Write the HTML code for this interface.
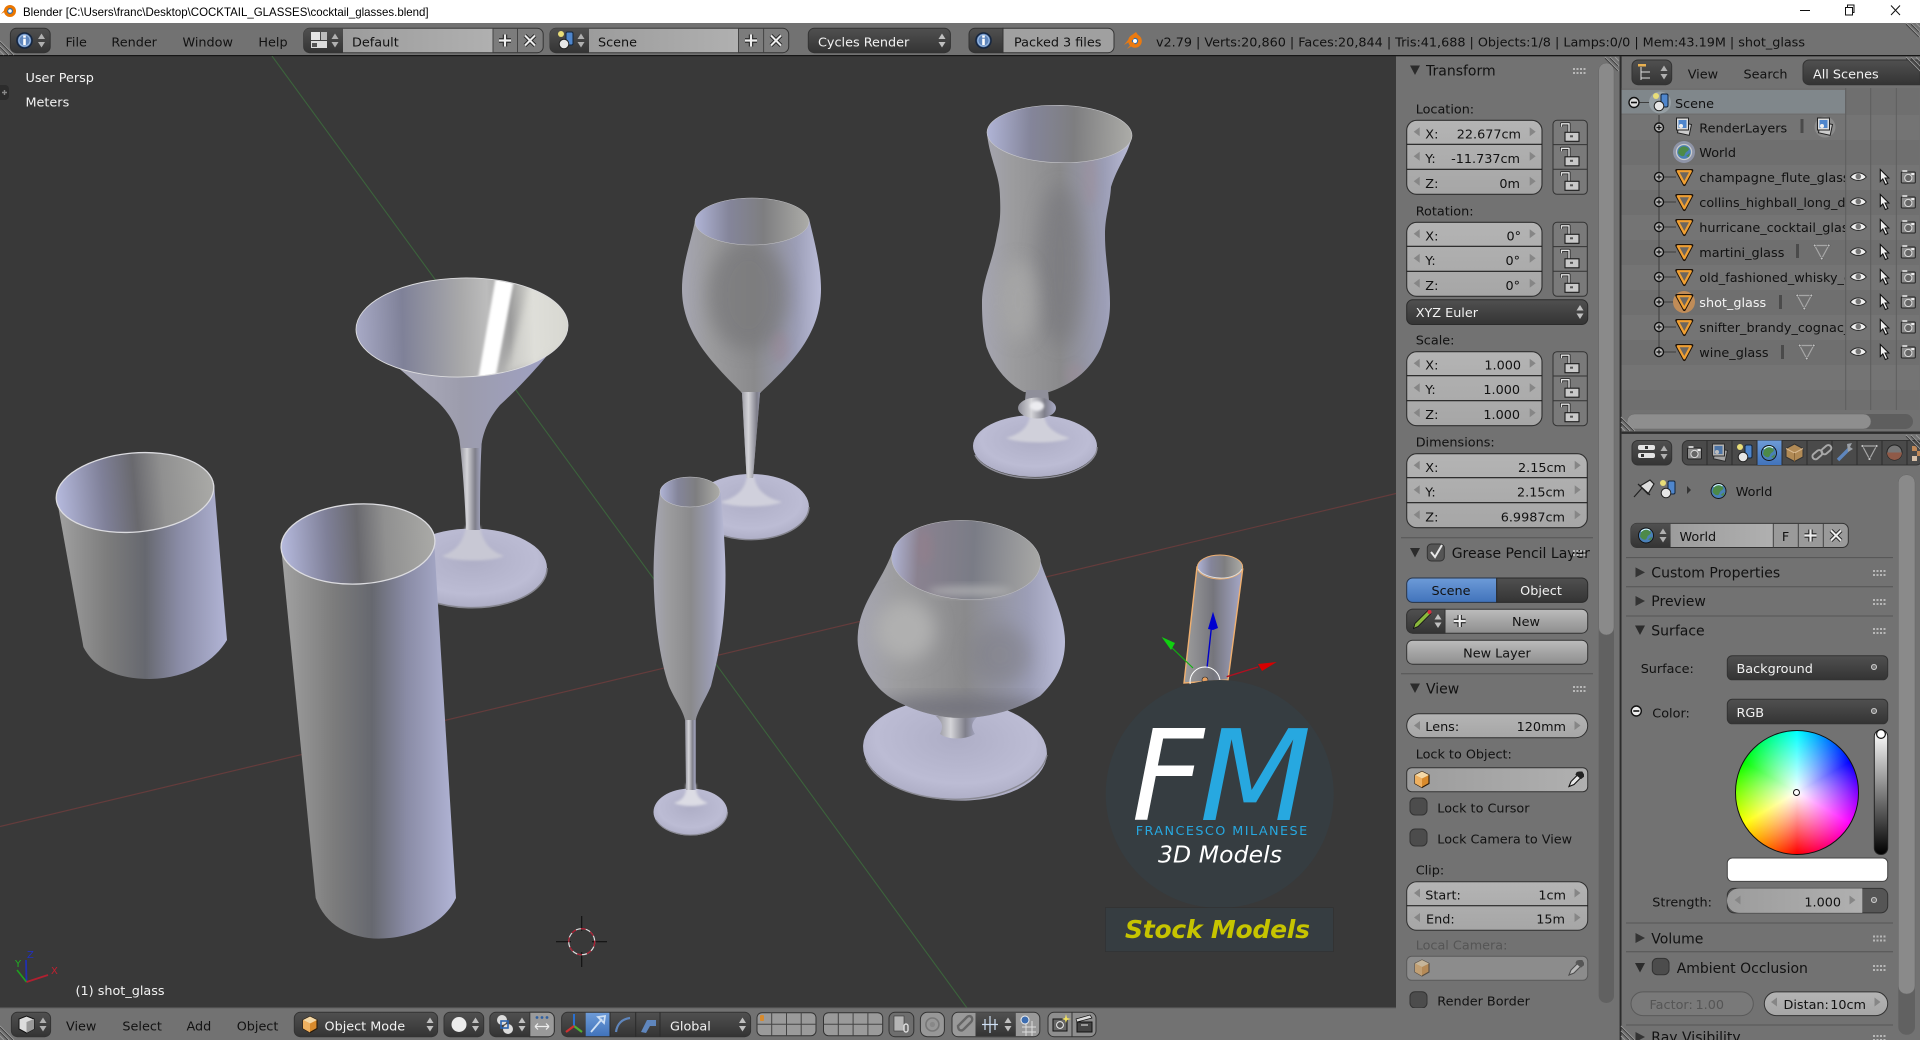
<!DOCTYPE html>
<html><head><meta charset="utf-8"><title>Blender</title>
<style>
html,body{margin:0;padding:0;width:1920px;height:1040px;overflow:hidden;background:#727272}
svg{position:absolute;left:0;top:0;display:block}
text{font-family:"DejaVu Sans",sans-serif;font-size:12.8px;fill:#111}
.w{fill:#f2f2f2}
.h{font-size:14px}
.e{text-anchor:end}
.c{text-anchor:middle}
.g{fill:#4c4c4c}
#wheel{position:absolute;left:1734.7px;top:730px;width:124.6px;height:124.6px;border-radius:50%;box-sizing:border-box;border:1px solid #111;background:radial-gradient(circle closest-side,#fff 0,rgba(255,255,255,.75) 25%,rgba(255,255,255,0) 100%),conic-gradient(#0ff 0deg,#00f 60deg,#f0f 120deg,#f00 180deg,#ff0 240deg,#0f0 300deg,#0ff 360deg)}
#mark{position:absolute;left:1793px;top:788.5px;width:5px;height:5px;border:1.5px solid #111;border-radius:50%;background:#fff}
</style></head><body>
<svg width="1920" height="1040" viewBox="0 0 1920 1040" xmlns="http://www.w3.org/2000/svg">
<defs>
<linearGradient id="gf" x1="0" y1="0" x2="0" y2="1"><stop offset="0" stop-color="#b4b4b4"/><stop offset="1" stop-color="#a6a6a6"/></linearGradient>
<linearGradient id="gd" x1="0" y1="0" x2="0" y2="1"><stop offset="0" stop-color="#505050"/><stop offset="1" stop-color="#343434"/></linearGradient>
<linearGradient id="gb" x1="0" y1="0" x2="0" y2="1"><stop offset="0" stop-color="#bcbcbc"/><stop offset="1" stop-color="#8e8e8e"/></linearGradient>
<linearGradient id="gn" x1="0" y1="0" x2="1" y2="0"><stop offset="0" stop-color="#9c9c9c"/><stop offset="1" stop-color="#b0b0b0"/></linearGradient>
<linearGradient id="gblue" x1="0" y1="0" x2="0" y2="1"><stop offset="0" stop-color="#6d9bd8"/><stop offset="1" stop-color="#4173bb"/></linearGradient>
<linearGradient id="gv" x1="0" y1="0" x2="0" y2="1"><stop offset="0" stop-color="#fff"/><stop offset="1" stop-color="#000"/></linearGradient>
<linearGradient id="gbody"><stop offset="0" stop-color="#a2a2a2"/><stop offset=".3" stop-color="#7c7c7c"/><stop offset=".52" stop-color="#66686f"/><stop offset=".72" stop-color="#8a8ca6"/><stop offset="1" stop-color="#b2b5d6"/></linearGradient>
<linearGradient id="ginn"><stop offset="0" stop-color="#b6bade"/><stop offset=".3" stop-color="#7f8098"/><stop offset=".5" stop-color="#69696e"/><stop offset=".68" stop-color="#909090"/><stop offset="1" stop-color="#aaaaa7"/></linearGradient>
<linearGradient id="gcv"><stop offset="0" stop-color="#a6a6b2"/><stop offset=".2" stop-color="#9c9c9e"/><stop offset=".52" stop-color="#8a8a8c"/><stop offset=".82" stop-color="#9c9eb6"/><stop offset="1" stop-color="#babcd8"/></linearGradient>
<linearGradient id="gcin"><stop offset="0" stop-color="#b0b4d6"/><stop offset=".3" stop-color="#84859a"/><stop offset=".6" stop-color="#7e7e80"/><stop offset="1" stop-color="#acacA8"/></linearGradient>
<linearGradient id="gsin"><stop offset="0" stop-color="#b0b4d4"/><stop offset=".18" stop-color="#8a8290"/><stop offset=".55" stop-color="#7a7c86"/><stop offset="1" stop-color="#a8a8a6"/></linearGradient>
<linearGradient id="gmart"><stop offset="0" stop-color="#a8aac6"/><stop offset=".22" stop-color="#7f8198"/><stop offset=".5" stop-color="#a9a9aa"/><stop offset=".62" stop-color="#bcbcbc"/><stop offset=".73" stop-color="#9c9c9c"/><stop offset=".84" stop-color="#dcdcd6"/><stop offset="1" stop-color="#c4c4bc"/></linearGradient>
<linearGradient id="gmo"><stop offset="0" stop-color="#b8b8c8"/><stop offset=".5" stop-color="#9c9cac"/><stop offset="1" stop-color="#a0a2c8"/></linearGradient>
<linearGradient id="gstem"><stop offset="0" stop-color="#8e8e98"/><stop offset=".35" stop-color="#d4d4d8"/><stop offset=".7" stop-color="#7f7f8a"/><stop offset="1" stop-color="#aaacc8"/></linearGradient>
<radialGradient id="gbase" cx=".5" cy=".4" r=".62"><stop offset="0" stop-color="#aeaec6"/><stop offset=".7" stop-color="#bcbcd4"/><stop offset=".93" stop-color="#b0b0c8"/><stop offset="1" stop-color="#9a9aa6"/></radialGradient>
<linearGradient id="gshot"><stop offset="0" stop-color="#9e9e9e"/><stop offset=".5" stop-color="#75757c"/><stop offset="1" stop-color="#a6a8c8"/></linearGradient>
<filter id="fb" x="-50%" y="-50%" width="200%" height="200%"><feGaussianBlur stdDeviation="9"/></filter>
<filter id="fb2" x="-50%" y="-50%" width="200%" height="200%"><feGaussianBlur stdDeviation="4"/></filter>
<filter id="fb3" x="-50%" y="-50%" width="200%" height="200%"><feGaussianBlur stdDeviation="1.2"/></filter>

<path id="pwine" d="M695 221C690 245 682 265 682 289C682 335 715 365 742 393L746.6 478L753 478L760 393C790 365 821 335 821 289C821 265 814 240 809 218.5Z"/>
<path id="phur" d="M987 134C990 160 1000 175 1000 197C1001 220 999 225 997 235C992 265 982 280 982 303C982 325 984 335 986.5 347C995 370 1010 385 1024 392L1049 392C1070 385 1090 372 1101 347C1107 330 1110 320 1110 303C1110 280 1105 260 1105 235C1105 215 1110 205 1111 187C1118 165 1128 155 1132 136Z"/>
<path id="pflu" d="M660 492C655 525 653.6 555 653.6 575C654 620 660 660 669 686C675 700 683 710 685 720L695.7 720C698 710 705 700 711 686C720 650 725.5 620 725.5 575C725.5 550 723 520 720.5 492Z"/>
<path id="psni" d="M892 553C880 585 857.6 605 857.6 640C858 665 875 688 891 698C915 712 940 718 962 718C990 718 1020 708 1040 696C1055 682 1065 665 1065 642C1065 615 1050 590 1040 560Z"/>

<g id="ud"><path d="M-3.5 -1.5L0 -7L3.5 -1.5Z" fill="#c0c0c0"/><path d="M-3.5 1.5L0 7L3.5 1.5Z" fill="#c0c0c0"/></g>
<g id="udk"><path d="M-3.5 -1.5L0 -7L3.5 -1.5Z" fill="#b0b0b0"/><path d="M-3.5 1.5L0 7L3.5 1.5Z" fill="#b0b0b0"/></g>
<path id="la" d="M3 -4.5L-3 0L3 4.5Z" fill="#868686"/>
<path id="ra" d="M-3 -4.5L3 0L-3 4.5Z" fill="#868686"/>
<g id="lock"><path d="M-8.5 -7V-10H-1V-1" fill="none" stroke="#222" stroke-width="3" stroke-linejoin="round"/><path d="M-8.5 -7V-10H-1V-1" fill="none" stroke="#e4e4e4" stroke-width="1.4" stroke-linejoin="round"/><rect x="-5" y="-1.5" width="14" height="9" fill="#c9c9c9" stroke="#1c1c1c" stroke-width="1.1"/><rect x="0" y="1.5" width="3" height="2" fill="#555"/></g>
<g id="l3"><rect width="34.3" height="74" rx="4" fill="#7a7a7a" stroke="#333"/><path d="M0 24.3H34.3M0 49H34.3" stroke="#333"/><use href="#lock" x="17" y="13.5"/><use href="#lock" x="17" y="38"/><use href="#lock" x="17" y="62.5"/></g>
<g id="f3s"><rect width="135.3" height="74" rx="10" fill="url(#gf)" stroke="#2f2f2f" stroke-width="1.1"/><path d="M0 24H135.3M0 49H135.3" stroke="#1c1c1c" stroke-width="1.1"/><use href="#la" x="10" y="11.5"/><use href="#la" x="10" y="36"/><use href="#la" x="10" y="61"/><use href="#ra" x="126" y="11.5"/><use href="#ra" x="126" y="36"/><use href="#ra" x="126" y="61"/></g>
<g id="f3l"><rect width="180.6" height="74" rx="10" fill="url(#gf)" stroke="#2f2f2f" stroke-width="1.1"/><path d="M0 24H180.6M0 49H180.6" stroke="#1c1c1c" stroke-width="1.1"/><use href="#la" x="10" y="11.5"/><use href="#la" x="10" y="36"/><use href="#la" x="10" y="61"/><use href="#ra" x="171" y="11.5"/><use href="#ra" x="171" y="36"/><use href="#ra" x="171" y="61"/></g>

<g id="info"><circle r="7.5" fill="#5f86bd" stroke="#16263f" stroke-width="1.6"/><circle r="5.6" fill="none" stroke="#a7c4e8" stroke-width=".8"/><rect x="-1.3" y="-1.8" width="2.6" height="6.4" fill="#fff"/><rect x="-1.3" y="-5" width="2.6" height="2.2" fill="#fff"/></g>
<g id="scn"><circle cx="-5" cy="-7" r="3" fill="#e8dd78"/><rect x="0" y="-9" width="7" height="13" rx="1.5" fill="#4f86cc" stroke="#10243c"/><circle cx="-2" cy="3" r="4.8" fill="#e6e6e6" stroke="#222"/></g>
<g id="tri"><path d="M-7.5 -6.5H7.5L0 7.5Z" fill="#6a5c4b" stroke="#1d1208" stroke-width="3" stroke-linejoin="round"/><path d="M-6.5 -5.8H6.5L0 6.3Z" fill="#6c665f" stroke="#f0a033" stroke-width="2.2" stroke-linejoin="round"/></g>
<g id="mtri"><path d="M-7 -6.5H7L0 6.5Z" fill="none" stroke="#a6a6a6" stroke-width="1.2"/><circle cx="-7" cy="-6.5" r="1.4" fill="#c4c4c4" stroke="#444" stroke-width=".5"/><circle cx="7" cy="-6.5" r="1.4" fill="#c4c4c4" stroke="#444" stroke-width=".5"/><circle cx="0" cy="6.5" r="1.4" fill="#c4c4c4" stroke="#444" stroke-width=".5"/></g>
<g id="eye"><path d="M-8 0C-4 -5.5 4 -5.5 8 0C4 4.5 -4 4.5 -8 0Z" fill="#f0f0f0" stroke="#222" stroke-width=".9"/><circle cy="-.5" r="2.8" fill="#777"/></g>
<path id="arr" d="M-4 -7.5L4.5 1L0.8 1L3.5 6.5L1 7.5L-1.5 2L-4 4.5Z" fill="#f0f0f0" stroke="#111" stroke-width="1.1"/>
<g id="cam"><rect x="-7" y="-5" width="14" height="11" rx="1" fill="#8c8c8c" stroke="#222"/><circle cy="1" r="3.6" fill="#666" stroke="#ddd"/><rect x="-6" y="-7" width="5" height="2" fill="#ccc"/><rect x="3" y="-4" width="3" height="2" fill="#eee"/></g>
<g id="plus"><circle r="4.5" fill="#b5b5b5" stroke="#111" stroke-width="1.4"/><path d="M-2.5 0H2.5M0 -2.5V2.5" stroke="#111" stroke-width="1.2"/></g>
<g id="minus"><circle r="5" fill="#ddd" stroke="#111" stroke-width="1.4"/><path d="M-3 0H3" stroke="#111" stroke-width="1.6"/></g>
<g id="globe"><circle r="7.5" fill="#4a80b8" stroke="#ccc" stroke-width="1.3"/><path d="M-5 -3C-2 -7 3 -6 5 -3C4 0 2 -1 1 2C0 6 -4 4 -6 1ZM2 4L6 1L5 5Z" fill="#4d8a48"/></g>
<g id="globek"><circle r="7.5" fill="#4a80b8" stroke="#111" stroke-width=".9"/><path d="M-5 -3C-2 -7 3 -6 5 -3C4 0 2 -1 1 2C0 6 -4 4 -6 1ZM2 4L6 1L5 5Z" fill="#4d8a48"/><path d="M-5 -4C-2 -7 2 -7 4 -5" stroke="#dff" fill="none" stroke-width="1"/></g>
<g id="rl"><rect x="-5" y="-3" width="12" height="11" fill="#ccc" stroke="#222" transform="rotate(12)"/><rect x="-7.5" y="-8" width="12" height="12" fill="#ddd" stroke="#222"/><rect x="-5.5" y="-6" width="8" height="8" fill="#4f86cc"/><circle cx="-3" cy="0" r="2" fill="#eee"/></g>
<g id="cube"><path d="M0 -8L7 -4.5V4L0 8L-7 4V-4.5Z" fill="#d88a2c" stroke="#2a1a08" stroke-width="1.1"/><path d="M0 -8L7 -4.5L0 -1L-7 -4.5Z" fill="#f4d8a6"/><path d="M0 -1V8L-7 4V-4.5Z" fill="#eeb060"/></g>
<g id="drop"><path d="M-7 7L-5 2L2 -5L5 -2L-2 5Z" fill="#e8e8e8" stroke="#111" stroke-width="1.1"/><path d="M1 -7L3 -7.5L6 -7.5L7.5 -5L7.5 -3L5 -1L0 -5Z" fill="#222" stroke="#222"/></g>
<g id="xx"><path d="M-5 -5L5 5M-5 5L5 -5" stroke="#222" stroke-width="4"/><path d="M-5 -5L5 5M-5 5L5 -5" stroke="#eee" stroke-width="2"/></g>
<g id="pp"><path d="M-6 0H6M0 -6V6" stroke="#222" stroke-width="4.4"/><path d="M-6 0H6M0 -6V6" stroke="#eee" stroke-width="2.2"/></g>
<g id="hatch"><path d="M0 0L14 14M5 0L14 9M10 0L14 4" stroke="#999" stroke-width="1"/><path d="M0 1.2L12.8 14M5 1.2L12.8 9" stroke="#333" stroke-width=".8"/></g>
<g id="hatchb"><path d="M0 0L14 14M0 5L9 14M0 10L4 14" stroke="#999" stroke-width="1"/><path d="M0 1.2L12.8 14M0 6.2L7.8 14" stroke="#333" stroke-width=".8"/></g>
<g id="grip" fill="#b8b8b8"><rect x="0" y="0" width="2" height="2"/><rect x="3.5" y="0" width="2" height="2"/><rect x="7" y="0" width="2" height="2"/><rect x="10.5" y="0" width="2" height="2"/><rect x="0" y="4" width="2" height="2"/><rect x="3.5" y="4" width="2" height="2"/><rect x="7" y="4" width="2" height="2"/><rect x="10.5" y="4" width="2" height="2"/></g>
<path id="td" d="M-5 -4.5H5L0 5Z" fill="#2b2b2b"/>
<path id="tr" d="M-4.5 -5L5 0L-4.5 5Z" fill="#333"/>
<clipPath id="cnames"><rect x="1660" y="90" width="185" height="280"/></clipPath>
<clipPath id="cvp"><rect x="0" y="56" width="1396" height="952"/></clipPath>
<clipPath id="cbot"><rect x="1621" y="434" width="299" height="606"/></clipPath>
<clipPath id="cwine"><use href="#pwine"/></clipPath>
<clipPath id="chur"><use href="#phur"/></clipPath>
<clipPath id="cflu"><use href="#pflu"/></clipPath>
<clipPath id="csni"><use href="#psni"/></clipPath>
<clipPath id="cmart"><ellipse cx="462" cy="327.5" rx="105.5" ry="49" transform="rotate(-1.3 462 327.5)"/></clipPath>
</defs>

<!-- window chrome -->
<rect width="1920" height="23" fill="#fff"/>
<g transform="translate(10,11)"><circle r="4.5" fill="#2c6db0" stroke="#ea7600" stroke-width="3"/><circle r="1.8" fill="#fff"/><path d="M-9 3L-3 -4L-2 -1Z" fill="#ea7600"/></g>
<text x="23" y="16" textLength="405.6" lengthAdjust="spacingAndGlyphs" style="font-family:'Liberation Sans',sans-serif;font-size:12px;fill:#000">Blender [C:\Users\franc\Desktop\COCKTAIL_GLASSES\cocktail_glasses.blend]</text>
<path d="M1800 10.5H1810" stroke="#111"/><path d="M1845.5 7.5H1852.5V15H1845.5ZM1847.5 7.5V5H1854V12.5H1852.5" fill="none" stroke="#111"/>
<path d="M1891 5.5L1900 15M1900 5.5L1891 15" stroke="#111"/>

<!-- top header -->
<rect y="23" width="1920" height="32" fill="#727272"/>
<rect y="55" width="1920" height="1.4" fill="#161616"/>
<use href="#hatchb" x="0" y="41"/><use href="#hatch" x="1906" y="23"/>
<rect x="10.4" y="28.3" width="39.8" height="24.4" rx="6" fill="url(#gd)" stroke="#333"/><use href="#info" x="24.5" y="40.5"/><use href="#udk" x="41.5" y="40.5"/>
<text x="65.5" y="46.5">File</text><text x="111.4" y="46.5">Render</text><text x="182.5" y="46.5">Window</text><text x="258.4" y="46.5">Help</text>
<rect x="303.7" y="28.3" width="239.5" height="24.4" rx="6" fill="#7c7c7c" stroke="#333"/>
<path d="M343 28.3H309.7a6 6 0 0 0-6 6V46.7a6 6 0 0 0 6 6H343Z" fill="url(#gd)"/>
<rect x="343" y="28.8" width="150" height="23.4" fill="url(#gn)"/>
<path d="M493 28.3V52.7M517.5 28.3V52.7" stroke="#444"/>
<rect x="311" y="32" width="9" height="8" fill="#e6e6e6"/><rect x="321" y="32" width="6" height="8" fill="#bbb"/><rect x="311" y="41" width="16" height="7" fill="#ddd"/><rect x="312" y="43" width="5" height="4" fill="#555"/><use href="#udk" x="335" y="40.5"/>
<text x="352" y="46.5">Default</text><use href="#pp" x="505" y="40.5"/><use href="#xx" x="530" y="40.5"/>
<rect x="550" y="28.3" width="238.7" height="24.4" rx="6" fill="#7c7c7c" stroke="#333"/>
<path d="M589 28.3H556a6 6 0 0 0-6 6V46.7a6 6 0 0 0 6 6H589Z" fill="url(#gd)"/>
<rect x="589" y="28.8" width="149.5" height="23.4" fill="url(#gn)"/><path d="M738.5 28.3V52.7M763.6 28.3V52.7" stroke="#444"/>
<use href="#scn" x="566" y="41"/><use href="#udk" x="581" y="40.5"/>
<text x="598" y="46.5">Scene</text><use href="#pp" x="751" y="40.5"/><use href="#xx" x="776" y="40.5"/>
<rect x="808.3" y="28.3" width="142.1" height="24.4" rx="6" fill="url(#gd)" stroke="#333"/>
<text x="818" y="46.5" class="w">Cycles Render</text><use href="#ud" x="942" y="40.5"/>
<path d="M975 28.3H1003V52.7H975a6 6 0 0 1-6-6V34.3a6 6 0 0 1 6-6Z" fill="url(#gd)" stroke="#333"/><use href="#info" x="983.5" y="40.5"/>
<path d="M1003 28.3H1108a6 6 0 0 1 6 6V46.7a6 6 0 0 1-6 6H1003Z" fill="#a0a0a0" stroke="#333"/>
<text x="1014" y="46.5">Packed 3 files</text>
<g transform="translate(1135,41)"><circle r="5" fill="#2f6eaf" stroke="#eb7a10" stroke-width="3.6"/><circle r="2" fill="#fff"/><path d="M-11 4L-3 -6L-1 -2ZM-8 8L-2 1L0 3Z" fill="#eb7a10"/><path d="M-3 -6L1 -9L3 -6Z" fill="#eb7a10"/></g>
<text x="1156" y="46.5" textLength="649" lengthAdjust="spacing">v2.79 | Verts:20,860 | Faces:20,844 | Tris:41,688 | Objects:1/8 | Lamps:0/0 | Mem:43.19M | shot_glass</text>

<!-- viewport -->
<rect y="56.4" width="1396" height="952" fill="#393939"/>
<g clip-path="url(#cvp)">
<path d="M272 56L967 1008" stroke="#3c633c" stroke-width="1.1"/>
<path d="M0 826.5L1396 493.5" stroke="#643c3c" stroke-width="1.2"/>

<!-- tumbler -->
<path d="M56.6 498L83.4 647C95 670 120 679 150 679C190 678 215 660 227 640L214 483Z" fill="url(#gbody)"/>
<ellipse cx="135" cy="492.5" rx="79" ry="39.5" transform="rotate(-5 135 492.5)" fill="url(#ginn)" stroke="#dcdce0" stroke-width="1.3"/>

<!-- martini -->
<ellipse cx="472" cy="568" rx="75" ry="39.5" fill="url(#gbase)"/>
<path d="M547 568A75 39.5 0 0 1 430 601" fill="none" stroke="#85858f" stroke-width="1.5"/>
<path d="M442 556C458 550 464 540 466 526H480C482 540 488 550 504 556C492 562 454 562 442 556Z" fill="#c8c8d4" filter="url(#fb3)"/>
<path d="M459 436C463 470 465 500 466 530H480C480 500 480 470 482 436Z" fill="url(#gstem)"/>
<path d="M356.7 332C380 352 415 382 438 402C452 416 459 430 461 448L481 448C483 430 490 417 500 405C525 382 552 352 568 328Z" fill="url(#gmo)"/>
<ellipse cx="462" cy="327.5" rx="106" ry="49.5" transform="rotate(-1.3 462 327.5)" fill="url(#gmart)" stroke="#dcdcde" stroke-width=".9"/>
<g clip-path="url(#cmart)">
<path d="M478 380L496 276L514 280L495 380Z" fill="#fff" filter="url(#fb3)"/>
<path d="M503 378L534 276L575 300L570 345Z" fill="#e0e0da" filter="url(#fb2)" opacity=".7"/>
</g>

<!-- collins -->
<path d="M281 546L315.7 898C325 925 350 938.6 379 938.6C415 938 445 922 456 898L434 540Z" fill="url(#gbody)"/>
<ellipse cx="358" cy="544" rx="77" ry="40" transform="rotate(-3 358 544)" fill="url(#ginn)" stroke="#dcdce0" stroke-width="1.3"/>

<!-- wine -->
<ellipse cx="751" cy="507" rx="58" ry="33" fill="url(#gbase)"/>
<path d="M809 507A58 33 0 0 1 710 530" fill="none" stroke="#85858f" stroke-width="1.4"/>
<path d="M720 502C736 498 745 490 747 476H754C756 490 766 498 782 502C768 508 734 508 720 502Z" fill="#d0d0dc" filter="url(#fb3)"/>
<use href="#pwine" fill="url(#gcv)"/>
<g clip-path="url(#cwine)"><ellipse cx="748" cy="295" rx="40" ry="55" fill="#78787a" opacity=".75" filter="url(#fb)"/><ellipse cx="780" cy="347" rx="9" ry="16" fill="#9c7a88" opacity=".25" filter="url(#fb2)"/><rect x="740" y="392" width="24" height="92" fill="url(#gstem)"/></g>
<ellipse cx="752" cy="221.5" rx="57" ry="23.5" fill="url(#gcin)" stroke="#c4c4c8" stroke-width=".5"/>

<!-- hurricane -->
<ellipse cx="1035" cy="446" rx="62" ry="31" fill="url(#gbase)"/>
<path d="M1097 447A62 31 0 0 1 975 455" fill="none" stroke="#8e8e98" stroke-width="1.4"/>
<path d="M1006 438C1020 434 1028 428 1030 416H1044C1046 428 1056 434 1070 438C1056 444 1020 444 1006 438Z" fill="#d0d0da" filter="url(#fb3)"/>
<use href="#phur" fill="url(#gcv)"/>
<g clip-path="url(#chur)"><ellipse cx="1060" cy="265" rx="22" ry="80" fill="#7c7c80" opacity=".8" filter="url(#fb)"/><ellipse cx="1018" cy="300" rx="18" ry="40" fill="#a8a8a8" opacity=".8" filter="url(#fb)"/><ellipse cx="1090" cy="180" rx="7" ry="26" fill="#a28a95" opacity=".3" filter="url(#fb2)"/><ellipse cx="1075" cy="375" rx="10" ry="12" fill="#a28a95" opacity=".3" filter="url(#fb2)"/></g>
<path d="M1026 390H1048L1049 400H1025Z" fill="#8f8f9a"/>
<ellipse cx="1037" cy="408" rx="19" ry="10.5" fill="url(#gstem)"/>
<ellipse cx="1037" cy="406" rx="7" ry="5" fill="#ececf0" filter="url(#fb3)"/>
<ellipse cx="1059.5" cy="134" rx="72.5" ry="28.7" transform="rotate(1.5 1059.5 134)" fill="url(#gcin)" stroke="#c8c8cc" stroke-width=".6"/>

<!-- flute -->
<ellipse cx="690.5" cy="812" rx="37" ry="23.5" fill="url(#gbase)"/>
<path d="M727.5 812A37 23.5 0 0 1 656 820" fill="none" stroke="#8a8a94" stroke-width="1.2"/>
<path d="M674 803C683 800 687 795 686 784H696C695 795 700 800 708 803C697 807 684 807 674 803Z" fill="#dcdce4" filter="url(#fb3)"/>
<path d="M685 716L686 790H695.7L695.7 716Z" fill="url(#gstem)"/>
<use href="#pflu" fill="url(#gcv)"/>
<ellipse cx="690" cy="492" rx="30" ry="15" fill="url(#gcin)" stroke="#c8c8cc" stroke-width=".5"/>

<!-- snifter -->
<ellipse cx="955" cy="750" rx="92" ry="50.5" transform="rotate(3 955 750)" fill="url(#gbase)"/>
<path d="M1047 755A92 50.5 0 0 1 866 760" fill="none" stroke="#8a8a94" stroke-width="1.4"/>
<path d="M936 716H978C972 722 970 726 975 734C965 740 948 740 940 734C944 726 942 722 936 716Z" fill="url(#gstem)"/>
<use href="#psni" fill="url(#gcv)"/>
<g clip-path="url(#csni)"><ellipse cx="960" cy="708" rx="90" ry="10" fill="#70707a" filter="url(#fb)"/><ellipse cx="905" cy="630" rx="30" ry="30" fill="#b0b0b0" filter="url(#fb)"/><ellipse cx="1000" cy="655" rx="30" ry="30" fill="#808088" opacity=".6" filter="url(#fb)"/></g>
<ellipse cx="966" cy="560" rx="74.5" ry="39.5" transform="rotate(3 966 560)" fill="url(#gsin)" stroke="#c0c0c4" stroke-width=".5"/>
<ellipse cx="925" cy="548" rx="8" ry="18" fill="#9c7c88" opacity=".3" filter="url(#fb2)"/>
<ellipse cx="970" cy="591" rx="42" ry="5" fill="#bdbdbd" opacity=".65" filter="url(#fb2)"/>

<!-- shot glass -->
<path d="M1197 567L1184 683L1228 680L1242.7 569Z" fill="url(#gshot)" stroke="#f0b070" stroke-width="1.4"/>
<ellipse cx="1220" cy="567" rx="22.7" ry="12" fill="url(#gcin)" stroke="#f0b070" stroke-width=".9"/>
<path d="M1198 569C1205 580 1235 582 1242 569" fill="none" stroke="#ddd" stroke-width=".9"/>
<!-- gizmo -->
<path d="M1207 668L1212 622" stroke="#0000c8" stroke-width="1.4"/><path d="M1213 611.7L1218 628L1213 630L1208 629Z" fill="#0000d0"/>
<path d="M1193 668L1168 644" stroke="#10b010" stroke-width="1.2"/><path d="M1161.7 637L1175 643L1171 650Z" fill="#10d010"/>
<path d="M1226.7 676.7L1258 667" stroke="#b01020" stroke-width="1.4"/><path d="M1276.7 662L1262 671L1258 664Z" fill="#d80000"/>
<circle cx="1205" cy="682" r="15" fill="none" stroke="#fff" stroke-width="1"/><circle cx="1205" cy="680" r="3" fill="#e8a060" stroke="#222" stroke-width=".6"/>

<!-- 3D cursor -->
<path d="M581.7 916V931M581.7 952V967M556 941.7H571M592 941.7H607" stroke="#111" stroke-width="1.1"/>
<circle cx="581.7" cy="941.7" r="13" fill="none" stroke="#ddd" stroke-width="1.2"/>
<circle cx="581.7" cy="941.7" r="13" fill="none" stroke="#a81c30" stroke-width="1.3" stroke-dasharray="5 5"/>

<!-- axes -->
<path d="M26.5 982L26 960" stroke="#2030b0" stroke-width="1.8"/><path d="M26.5 982L17 970" stroke="#20a020" stroke-width="1.6"/><path d="M26.5 982L48 975" stroke="#b02030" stroke-width="1.8"/>
<text x="27" y="958" style="font-size:10px;fill:#2030c0">Z</text><text x="15" y="967" style="font-size:10px;fill:#20b020">Y</text><text x="51" y="974" style="font-size:10px;fill:#c02030">X</text>

<text x="25.5" y="81.8" class="w">User Persp</text><text x="25.5" y="106.4" class="w">Meters</text><text x="75.5" y="995" class="w">(1) shot_glass</text>
<path d="M0 85H5a4 4 0 0 1 4 4V96a4 4 0 0 1-4 4H0Z" fill="#2c2c2c"/><path d="M2 92.5H7M4.5 90V95" stroke="#888" stroke-width="1.4"/>

<!-- logo -->
<circle cx="1219.7" cy="794" r="114" fill="#363d41"/>
<rect x="1105.3" y="907.7" width="228" height="44" fill="#363d41" stroke="#303030" stroke-width=".6"/>
<text x="1131.5" y="820" style="font-size:126px;font-style:oblique;fill:#fff">F</text>
<text x="1199.5" y="820" textLength="112" lengthAdjust="spacingAndGlyphs" style="font-size:126px;font-style:oblique;fill:#27a8e0">M</text>
<text x="1135.7" y="835" textLength="171.5" lengthAdjust="spacing" style="font-size:12.8px;fill:#27a8e0">FRANCESCO MILANESE</text>
<text x="1158" y="862.7" textLength="124" lengthAdjust="spacing" style="font-size:23.5px;font-style:oblique;fill:#fff">3D Models</text>
<text x="1125" y="938" textLength="185" lengthAdjust="spacing" style="font-size:25px;font-weight:bold;font-style:oblique;fill:#c6c400">Stock Models</text>
</g>

<!-- N panel -->
<rect x="1396" y="56.4" width="225" height="952" fill="#727272"/>
<rect x="1598.7" y="63" width="15.3" height="940" rx="7.5" fill="#616161"/>
<rect x="1598.7" y="63" width="15.3" height="572" rx="7.5" fill="#8a8a8a" stroke="#666" stroke-width=".5"/>
<use href="#hatch" x="1605" y="57"/>
<use href="#td" x="1415" y="70"/><text x="1426" y="75.5" class="h">Transform</text><use href="#grip" x="1573" y="68"/>
<text x="1415.7" y="113.5">Location:</text>
<use href="#f3s" x="1406.7" y="120.3"/>
<text x="1425.3" y="138.5">X:</text><text x="1521" y="138.5" class="e">22.677cm</text>
<text x="1425.3" y="163">Y:</text><text x="1520" y="163" class="e">-11.737cm</text>
<text x="1425.3" y="188">Z:</text><text x="1520" y="188" class="e">0m</text>
<use href="#l3" x="1553" y="120.3"/>
<text x="1415.7" y="215.5">Rotation:</text>
<use href="#f3s" x="1406.7" y="222.3"/>
<text x="1425.3" y="240.5">X:</text><text x="1521" y="240.5" class="e">0°</text>
<text x="1425.3" y="265">Y:</text><text x="1520" y="265" class="e">0°</text>
<text x="1425.3" y="290">Z:</text><text x="1520" y="290" class="e">0°</text>
<use href="#l3" x="1553" y="222.3"/>
<rect x="1406.7" y="299.8" width="181" height="24.7" rx="6" fill="url(#gd)" stroke="#2a2a2a"/>
<text x="1415.7" y="317" class="w">XYZ Euler</text><use href="#ud" x="1580" y="312"/>
<text x="1415.7" y="344.5">Scale:</text>
<use href="#f3s" x="1406.7" y="351.7"/>
<text x="1425.3" y="369.5">X:</text><text x="1521" y="369.5" class="e">1.000</text>
<text x="1425.3" y="394">Y:</text><text x="1520" y="394" class="e">1.000</text>
<text x="1425.3" y="419">Z:</text><text x="1520" y="419" class="e">1.000</text>
<use href="#l3" x="1553" y="351.7"/>
<text x="1415.7" y="446.5">Dimensions:</text>
<use href="#f3l" x="1406.7" y="453.7"/>
<text x="1425.3" y="472">X:</text><text x="1566" y="472" class="e">2.15cm</text>
<text x="1425.3" y="496.5">Y:</text><text x="1565" y="496.5" class="e">2.15cm</text>
<text x="1425.3" y="521.5">Z:</text><text x="1565" y="521.5" class="e">6.9987cm</text>
<path d="M1401 537.7H1593" stroke="#555"/>
<use href="#td" x="1415" y="552.5"/>
<rect x="1427.3" y="544" width="17" height="17" rx="4" fill="#555" stroke="#333"/><path d="M1431 552L1435 557L1442 545" fill="none" stroke="#e8e8e8" stroke-width="2"/>
<text x="1451.7" y="557.8" class="h">Grease Pencil Layer</text><use href="#grip" x="1573" y="550"/>
<path d="M1412.7 578H1496.7V602.4H1412.7a6 6 0 0 1-6-6V584a6 6 0 0 1 6-6Z" fill="url(#gblue)" stroke="#26344a"/>
<path d="M1496.7 578H1581.7a6 6 0 0 1 6 6V596.4a6 6 0 0 1-6 6H1496.7Z" fill="url(#gd)" stroke="#2a2a2a"/>
<text x="1451" y="595" class="c">Scene</text><text x="1541" y="595" class="c w">Object</text>
<rect x="1406.7" y="609.2" width="181" height="24" rx="6" fill="url(#gb)" stroke="#333"/>
<path d="M1445 609.2H1412.7a6 6 0 0 0-6 6V627.2a6 6 0 0 0 6 6H1445Z" fill="url(#gd)" stroke="#333"/>
<path d="M1413.5 628.5L1415 623.5L1428 610.5L1431 613.5L1418 626.5Z" fill="#8ab83c" stroke="#111" stroke-width=".8"/><circle cx="1429.5" cy="612" r="2" fill="#d83040"/>
<use href="#ud" x="1438" y="621"/><use href="#pp" x="1459.7" y="621"/>
<text x="1526" y="626" class="c">New</text>
<rect x="1406.7" y="640.2" width="181" height="24" rx="6" fill="url(#gb)" stroke="#333"/>
<text x="1497" y="657.5" class="c">New Layer</text>
<path d="M1401 673.7H1593" stroke="#555"/>
<use href="#td" x="1415" y="688"/><text x="1426" y="693.5" class="h">View</text><use href="#grip" x="1573" y="686"/>
<rect x="1406.7" y="713.7" width="181" height="24" rx="12" fill="url(#gf)" stroke="#2f2f2f"/>
<use href="#la" x="1417" y="725.5"/><use href="#ra" x="1577.5" y="725.5"/>
<text x="1425.3" y="731">Lens:</text><text x="1566" y="731" class="e">120mm</text>
<text x="1415.7" y="758.5">Lock to Object:</text>
<rect x="1406.7" y="767.7" width="181" height="24" rx="5" fill="url(#gn)" stroke="#333"/>
<use href="#cube" x="1422" y="779.5"/><use href="#drop" x="1576" y="779.5"/>
<rect x="1410" y="798" width="17" height="17" rx="5" fill="#4c4c4c" stroke="#333"/><text x="1437.3" y="812.5">Lock to Cursor</text>
<rect x="1410" y="829" width="17" height="17" rx="5" fill="#4c4c4c" stroke="#333"/><text x="1437.3" y="843.5">Lock Camera to View</text>
<text x="1415.7" y="874.5">Clip:</text>
<rect x="1406.7" y="881.7" width="181" height="48.6" rx="10" fill="url(#gf)" stroke="#2f2f2f"/><path d="M1406.7 905.7H1587.7" stroke="#111"/>
<use href="#la" x="1417" y="893"/><use href="#la" x="1417" y="917.5"/><use href="#ra" x="1577.5" y="893"/><use href="#ra" x="1577.5" y="917.5"/>
<text x="1425.3" y="899.5">Start:</text><text x="1566" y="899.5" class="e">1cm</text>
<text x="1426" y="923.5">End:</text><text x="1565" y="923.5" class="e">15m</text>
<text x="1415.7" y="949.5" class="g" style="fill:#555">Local Camera:</text>
<rect x="1406.7" y="956.3" width="181" height="24" rx="5" fill="#8c8c8c" stroke="#5a5a5a"/>
<use href="#cube" x="1422" y="968" opacity=".55"/><use href="#drop" x="1576" y="968" opacity=".5"/>
<rect x="1410" y="991.7" width="17" height="16.3" rx="5" fill="#4c4c4c" stroke="#333"/><text x="1437.3" y="1005.5">Render Border</text>

<!-- bottom header -->
<rect y="1008" width="1621" height="32" fill="#727272"/>
<rect y="1007.4" width="1396" height="1" fill="#5e5e5e"/>
<use href="#hatchb" x="0" y="1026"/>
<rect x="11.4" y="1012.3" width="39.2" height="24.4" rx="6" fill="url(#gd)" stroke="#333"/>
<path d="M19 1019L26.5 1016L34 1019V1029L26.5 1033L19 1029Z" fill="#ddd" stroke="#111"/><path d="M26.5 1022V1033L34 1029V1019Z" fill="#999"/><use href="#udk" x="43" y="1024.5"/>
<text x="66" y="1030.5">View</text><text x="122.4" y="1030.5">Select</text><text x="186.5" y="1030.5">Add</text><text x="236.7" y="1030.5">Object</text>
<rect x="294.3" y="1012.3" width="143.3" height="24.4" rx="6" fill="url(#gd)" stroke="#333"/>
<use href="#cube" x="310" y="1024.5"/><text x="324.5" y="1030.5" class="w">Object Mode</text><use href="#ud" x="430" y="1024.5"/>
<rect x="444" y="1012.3" width="39.7" height="24.4" rx="6" fill="url(#gd)" stroke="#333"/>
<circle cx="459" cy="1024.5" r="7.5" fill="#ececec"/><use href="#ud" x="475.5" y="1024.5"/>
<rect x="489.8" y="1012.3" width="64.5" height="24.4" rx="6" fill="url(#gd)" stroke="#333"/>
<path d="M529.8 1012.3H548.3a6 6 0 0 1 6 6V1030.7a6 6 0 0 1-6 6H529.8Z" fill="#9a9a9a" stroke="#333"/>
<circle cx="502" cy="1020" r="5" fill="#ddd"/><circle cx="508" cy="1029" r="5" fill="#ddd"/><rect x="501" y="1021" width="7" height="7" fill="none" stroke="#2a64b0" stroke-width="1.6"/><use href="#ud" x="522" y="1024.5"/>
<path d="M535 1026.5H549M535 1026.5L538 1023.5M535 1026.5L538 1029.5M549 1026.5L546 1023.5M549 1026.5L546 1029.5" stroke="#eee" fill="none" stroke-width="1.2"/><circle cx="537" cy="1017.5" r="1.4" fill="#2f5fa0"/><circle cx="542" cy="1017.5" r="1.4" fill="#2f5fa0"/><circle cx="547" cy="1017.5" r="1.4" fill="#2f5fa0"/>
<rect x="561.6" y="1012.3" width="189" height="24.4" rx="6" fill="url(#gd)" stroke="#333"/>
<rect x="585.7" y="1012.8" width="24.3" height="23.4" fill="url(#gblue)"/>
<path d="M610 1012.3V1036.7M635.7 1012.3V1036.7M660 1012.3V1036.7" stroke="#2a2a2a"/>
<path d="M574 1014V1026" stroke="#2a70d0" stroke-width="2"/><path d="M574 1026L582 1032" stroke="#50b030" stroke-width="2.2"/><path d="M574 1026L566 1032" stroke="#d03030" stroke-width="2.2"/>
<path d="M591 1032L602 1019M598 1017L605 1016L604 1023Z" stroke="#cfe0f4" stroke-width="1.8" fill="none"/>
<path d="M616 1032C617 1024 622 1019 630 1018" stroke="#5f86bd" stroke-width="2.2" fill="none"/>
<path d="M641 1032L647 1020H656V1026H650L646 1033Z" fill="#5f86bd"/>
<text x="670" y="1030.5" class="w">Global</text><use href="#ud" x="742.5" y="1024.5"/>
<rect x="757" y="1012.7" width="59" height="23" rx="5" fill="#9a9a9a" stroke="#333"/><path d="M757 1024.2H816M771.7 1012.7V1035.7M786.5 1012.7V1035.7M801.2 1012.7V1035.7" stroke="#444"/><rect x="760" y="1015" width="4" height="6" rx="1" fill="#d88a2c"/>
<rect x="823.5" y="1012.7" width="59.2" height="23" rx="5" fill="#9a9a9a" stroke="#333"/><path d="M823.5 1024.2H882.7M838.3 1012.7V1035.7M853.1 1012.7V1035.7M867.9 1012.7V1035.7" stroke="#444"/>
<rect x="889" y="1012.3" width="24.8" height="24.4" rx="6" fill="#6e6e6e" stroke="#333"/><rect x="894" y="1016" width="10" height="15" fill="#b4b4b4" stroke="#333" stroke-width=".6"/><rect x="904" y="1024" width="4" height="8" rx="2" fill="none" stroke="#ddd" stroke-width="1.4"/>
<rect x="920.4" y="1012.3" width="24" height="24.4" rx="7" fill="#979797" stroke="#333"/><circle cx="932.4" cy="1024.5" r="6.5" fill="none" stroke="#777" stroke-width="1.6"/><circle cx="932.4" cy="1024.5" r="2.6" fill="#888"/>
<rect x="952" y="1012.3" width="87.8" height="24.4" rx="6" fill="#999" stroke="#333"/>
<rect x="975.5" y="1012.8" width="40.3" height="23.4" fill="url(#gd)"/>
<path d="M958 1026L967 1017C971 1014 974 1019 971 1022L964 1029C961 1032 958 1030 958 1026Z" fill="none" stroke="#666" stroke-width="2.4"/>
<path d="M982 1024.5H998M985 1019V1030M990 1016V1033M995 1019V1030" stroke="#cfe0f4" stroke-width="1.2"/><use href="#ud" x="1008" y="1024.5"/>
<path d="M1022 1027H1036M1022 1032H1036M1026 1021V1036M1032 1021V1036" stroke="#ddd"/><circle cx="1025" cy="1020" r="4" fill="#3d6db0" stroke="#eee"/>
<rect x="1048" y="1012.3" width="48" height="24.4" rx="6" fill="#8e8e8e" stroke="#333"/><path d="M1072 1012.3V1036.7" stroke="#333"/>
<rect x="1053" y="1019" width="14" height="12" fill="#666" stroke="#111"/><circle cx="1060" cy="1025" r="3.4" fill="#555" stroke="#eee"/><path d="M1066 1014L1067 1018L1071 1019L1067 1020L1066 1023L1065 1020L1062 1019L1065 1018Z" fill="#f0e060"/>
<rect x="1077" y="1022" width="15" height="10" fill="#444" stroke="#111"/><path d="M1076 1019L1090 1015L1092 1018L1077 1022Z" fill="#ddd" stroke="#111" stroke-width=".7"/><path d="M1081 1025H1088" stroke="#eee"/>

<!-- outliner -->
<rect x="1621" y="56.4" width="299" height="376" fill="#727272"/>
<rect x="1619.6" y="56" width="2" height="984" fill="#2c2c2c"/>
<rect x="1632" y="60" width="39.7" height="24.7" rx="6" fill="url(#gd)" stroke="#333"/>
<rect x="1638" y="64" width="8" height="2.5" fill="#e8b050"/><path d="M1641 67V80M1641 72H1650M1641 78H1650" stroke="#ddd"/><use href="#udk" x="1664" y="72.5"/>
<text x="1687.7" y="78.5">View</text><text x="1743.5" y="78.5">Search</text>
<path d="M1920 60H1809a6 6 0 0 0-6 6V78.7a6 6 0 0 0 6 6H1920Z" fill="url(#gd)" stroke="#333"/>
<text x="1813" y="78.5" class="w">All Scenes</text>
<use href="#hatch" x="1906" y="57"/>
<rect x="1621.6" y="88" width="298" height="322" fill="#6f6f6f"/>
<g fill="#747474"><rect x="1621.6" y="115" width="298" height="25"/><rect x="1621.6" y="165" width="298" height="25"/><rect x="1621.6" y="215" width="298" height="25"/><rect x="1621.6" y="265" width="298" height="25"/><rect x="1621.6" y="315" width="298" height="25"/><rect x="1621.6" y="365" width="298" height="25"/></g>
<rect x="1621.6" y="90" width="223.6" height="23.5" fill="#80878b"/>
<path d="M1845.7 88V410M1870.7 88V410M1896.3 88V410" stroke="#5e5e5e"/>
<path d="M1659 115V353" stroke="#3d3d3d"/>
<path d="M1659 177H1676M1659 202H1676M1659 227H1676M1659 252H1676M1659 277H1676M1659 302H1676M1659 327H1676M1659 352H1676" stroke="#3d3d3d"/>
<path d="M1634 102.5H1655" stroke="#3d3d3d"/>
<use href="#minus" x="1634" y="102.5"/>
<circle cx="1660" cy="102.5" r="11" fill="#97a0a5"/><use href="#scn" x="1661" y="103"/>
<text x="1675" y="108">Scene</text>
<use href="#plus" x="1659" y="127.5"/><use href="#rl" x="1684" y="126"/>
<circle cx="1684" cy="152" r="11" fill="#8f95a8"/><use href="#globe" x="1684" y="152"/>
<circle cx="1825" cy="127" r="10.5" fill="#8a8a8a"/><use href="#rl" x="1825" y="126"/><rect x="1800.5" y="119" width="3" height="14" fill="#4a4a4a"/>
<circle cx="1684" cy="302" r="11" fill="#c08c58"/>
<use href="#plus" x="1659" y="177"/><use href="#tri" x="1684.3" y="177"/><use href="#eye" x="1858.3" y="177"/><use href="#arr" x="1884.3" y="177"/><use href="#cam" x="1908.3" y="177"/>
<use href="#plus" x="1659" y="202"/><use href="#tri" x="1684.3" y="202"/><use href="#eye" x="1858.3" y="202"/><use href="#arr" x="1884.3" y="202"/><use href="#cam" x="1908.3" y="202"/>
<use href="#plus" x="1659" y="227"/><use href="#tri" x="1684.3" y="227"/><use href="#eye" x="1858.3" y="227"/><use href="#arr" x="1884.3" y="227"/><use href="#cam" x="1908.3" y="227"/>
<use href="#plus" x="1659" y="252"/><use href="#tri" x="1684.3" y="252"/><use href="#eye" x="1858.3" y="252"/><use href="#arr" x="1884.3" y="252"/><use href="#cam" x="1908.3" y="252"/>
<use href="#plus" x="1659" y="277"/><use href="#tri" x="1684.3" y="277"/><use href="#eye" x="1858.3" y="277"/><use href="#arr" x="1884.3" y="277"/><use href="#cam" x="1908.3" y="277"/>
<use href="#plus" x="1659" y="302"/><use href="#tri" x="1684.3" y="302"/><use href="#eye" x="1858.3" y="302"/><use href="#arr" x="1884.3" y="302"/><use href="#cam" x="1908.3" y="302"/>
<use href="#plus" x="1659" y="327"/><use href="#tri" x="1684.3" y="327"/><use href="#eye" x="1858.3" y="327"/><use href="#arr" x="1884.3" y="327"/><use href="#cam" x="1908.3" y="327"/>
<use href="#plus" x="1659" y="352"/><use href="#tri" x="1684.3" y="352"/><use href="#eye" x="1858.3" y="352"/><use href="#arr" x="1884.3" y="352"/><use href="#cam" x="1908.3" y="352"/>
<rect x="1796" y="244" width="3" height="14" fill="#4a4a4a"/><use href="#mtri" x="1821.7" y="252"/>
<rect x="1779" y="295" width="3" height="14" fill="#4a4a4a"/><use href="#mtri" x="1804.3" y="302"/>
<rect x="1781" y="345" width="3" height="14" fill="#4a4a4a"/><use href="#mtri" x="1806.7" y="352"/>
<g clip-path="url(#cnames)">
<text x="1699.3" y="132.5">RenderLayers</text><text x="1699.3" y="157">World</text>
<text x="1699.3" y="182">champagne_flute_glass</text>
<text x="1699.3" y="207">collins_highball_long_drink</text>
<text x="1699.3" y="232">hurricane_cocktail_glass</text>
<text x="1699.3" y="257">martini_glass</text>
<text x="1699.3" y="282">old_fashioned_whisky_glass</text>
<text x="1699.3" y="307" style="fill:#f4f4f4">shot_glass</text>
<text x="1699.3" y="332">snifter_brandy_cognac_glass</text>
<text x="1699.3" y="357">wine_glass</text>
</g>
<rect x="1627" y="414" width="286" height="15" rx="7.5" fill="#5e5e5e"/>
<rect x="1627" y="414" width="244" height="15" rx="7.5" fill="#8e8e8e" stroke="#666" stroke-width=".5"/>
<use href="#hatchb" x="1621" y="417"/>
<rect x="1621.6" y="431.5" width="298.4" height="2.4" fill="#2e2e2e"/>

<!-- properties -->
<rect x="1621.6" y="434" width="298.4" height="606" fill="#727272"/>
<rect x="1632" y="440.5" width="39.7" height="24.5" rx="6" fill="url(#gd)" stroke="#333"/>
<rect x="1638" y="445" width="17" height="5" rx="2" fill="#e4e4e4"/><rect x="1638" y="453" width="17" height="5" rx="2" fill="#e4e4e4"/><rect x="1645" y="446" width="3" height="3" fill="#333"/><rect x="1641" y="454" width="3" height="3" fill="#333"/><use href="#udk" x="1664" y="452.5"/>
<rect x="1682.3" y="440.5" width="240" height="24.5" rx="6" fill="#4a4a4a" stroke="#333"/>
<rect x="1757" y="440.5" width="25" height="24.5" fill="url(#gblue)"/>
<path d="M1707 440.5V465M1732 440.5V465M1757 440.5V465M1782 440.5V465M1807 440.5V465M1832 440.5V465M1857 440.5V465M1882 440.5V465M1907 440.5V465" stroke="#2c2c2c"/>
<use href="#cam" x="1694.5" y="453"/><g transform="translate(1720,452)"><use href="#rl" opacity=".7"/></g><use href="#scn" x="1745" y="454"/>
<use href="#globek" x="1769" y="453"/>
<path d="M1794.5 444L1803 448.5V457L1794.5 461.5L1786 457V448.5Z" fill="#b18a55" stroke="#333"/><path d="M1786 448.5L1794.5 453L1803 448.5" fill="none" stroke="#d8b890"/><path d="M1794.5 453V461.5" stroke="#8a6638"/>
<g fill="none" stroke="#a8a8a8" stroke-width="2"><rect x="1812" y="452" width="11" height="6" rx="3" transform="rotate(-40 1817 455)"/><rect x="1821" y="447" width="11" height="6" rx="3" transform="rotate(-40 1826 450)"/></g>
<path d="M1838 460L1849 449" stroke="#5f86bd" stroke-width="3.4"/><path d="M1847 444L1852 443L1850 447L1853 449L1848 452Z" fill="#9a9fa6"/>
<use href="#mtri" x="1869.5" y="452.5"/>
<circle cx="1894.5" cy="452.5" r="7.5" fill="#777" stroke="#222"/><path d="M1887 452.5A7.5 7.5 0 0 0 1902 452.5Z" fill="#8f5a48"/>
<rect x="1912" y="446" width="5" height="5" fill="#c08858"/><rect x="1917" y="451" width="3" height="5" fill="#c08858"/><rect x="1912" y="456" width="5" height="5" fill="#d8c0a8"/>
<use href="#hatch" x="1906" y="435"/>
<rect x="1898.3" y="474.7" width="16.7" height="560" rx="8" fill="#616161"/>
<rect x="1898.3" y="474.7" width="16.7" height="519.3" rx="8" fill="#8a8a8a" stroke="#666" stroke-width=".5"/>
<path d="M1634 497L1642 488M1638 484L1650 495M1640 486L1650 480L1654 484L1648 494Z" fill="#ddd" stroke="#222" stroke-width="1.2"/>
<use href="#scn" x="1668" y="490"/><path d="M1687 486L1691 490L1687 494Z" fill="#333"/>
<use href="#globek" x="1718.5" y="491"/><text x="1735.7" y="496">World</text>
<rect x="1631" y="523.4" width="217.3" height="24.1" rx="6" fill="#9a9a9a" stroke="#333"/>
<path d="M1670.7 523.4H1637a6 6 0 0 0-6 6V541.5a6 6 0 0 0 6 6H1670.7Z" fill="url(#gd)"/>
<rect x="1670.7" y="523.9" width="102.6" height="23.1" fill="url(#gn)"/>
<path d="M1773.3 523.4V547.5M1798.3 523.4V547.5M1823.3 523.4V547.5" stroke="#444"/>
<use href="#globek" x="1646" y="535.5"/><use href="#udk" x="1663" y="535.5"/>
<text x="1679.5" y="541">World</text><text x="1785.5" y="541" class="c">F</text><use href="#pp" x="1810.5" y="535.5"/><use href="#xx" x="1836" y="535.5"/>
<path d="M1626 557.6H1893M1626 586.8H1893M1626 616H1893M1626 923H1893M1626 951.8H1893M1626 1025H1893" stroke="#555"/>
<use href="#tr" x="1640" y="572.4"/><text x="1651.3" y="577.5" class="h">Custom Properties</text><use href="#grip" x="1873" y="570"/>
<use href="#tr" x="1640" y="601"/><text x="1651.3" y="606" class="h">Preview</text><use href="#grip" x="1873" y="599"/>
<use href="#td" x="1640" y="630"/><text x="1651.3" y="635.5" class="h">Surface</text><use href="#grip" x="1873" y="628"/>
<text x="1640.7" y="673">Surface:</text>
<rect x="1727.3" y="655.7" width="160.4" height="24.1" rx="5" fill="url(#gd)" stroke="#333"/><text x="1736.5" y="673" class="w">Background</text>
<circle cx="1874" cy="667" r="2.6" fill="#777" stroke="#ddd" stroke-width=".8"/>
<circle cx="1636.3" cy="711" r="5" fill="#eee" stroke="#111" stroke-width="1.4"/><path d="M1633.3 711H1639.3" stroke="#111" stroke-width="1.6"/>
<text x="1652.3" y="717.5">Color:</text>
<rect x="1727.3" y="699.3" width="160.4" height="24.5" rx="5" fill="url(#gd)" stroke="#333"/><text x="1736.5" y="717" class="w">RGB</text>
<circle cx="1874" cy="711" r="2.6" fill="#777" stroke="#ddd" stroke-width=".8"/>
<rect x="1874.3" y="730" width="13.4" height="124.5" rx="6.5" fill="url(#gv)" stroke="#222"/>
<circle cx="1881" cy="734" r="4.4" fill="#fff" stroke="#111" stroke-width="1.2"/>
<rect x="1727.3" y="858" width="160.4" height="23.4" rx="5" fill="#fff" stroke="#444"/>
<text x="1652.3" y="906.5">Strength:</text>
<rect x="1727.3" y="888.4" width="160.4" height="24.5" rx="7" fill="#555" stroke="#333"/>
<path d="M1862.3 888.4H1739a12 12 0 0 0-12 12v.5a12 12 0 0 0 12 12H1862.3Z" fill="url(#gn)"/>
<use href="#la" x="1737.5" y="900"/><use href="#ra" x="1852.5" y="900"/>
<text x="1841" y="906.5" class="e">1.000</text><circle cx="1874" cy="900" r="2.6" fill="#777" stroke="#ddd" stroke-width=".8"/>
<use href="#tr" x="1640" y="938"/><text x="1651.3" y="943.5" class="h">Volume</text><use href="#grip" x="1873" y="935.5"/>
<use href="#td" x="1640" y="967.5"/>
<rect x="1652.3" y="958.4" width="16.7" height="16.3" rx="5" fill="#4c4c4c" stroke="#333"/>
<text x="1676.7" y="973" class="h">Ambient Occlusion</text><use href="#grip" x="1873" y="965"/>
<rect x="1631" y="991.9" width="122.3" height="23.7" rx="11.8" fill="#797979" stroke="#5a5a5a"/>
<text x="1649.5" y="1009" style="fill:#555">Factor:</text><text x="1724" y="1009" class="e" style="fill:#555">1.00</text>
<rect x="1764.3" y="991.9" width="123.4" height="23.7" rx="11.8" fill="url(#gf)" stroke="#333"/>
<use href="#la" x="1774" y="1002"/><use href="#ra" x="1877.5" y="1002"/>
<text x="1783.5" y="1009">Distan:</text><text x="1866" y="1009" class="e">10cm</text>
<g clip-path="url(#cbot)"><use href="#tr" x="1640" y="1037"/><text x="1651.3" y="1042" class="h">Ray Visibility</text><use href="#grip" x="1873" y="1035"/></g>
<use href="#hatchb" x="1621" y="1026"/>
</svg>
<div id="wheel"></div><div id="mark"></div>
</body></html>
